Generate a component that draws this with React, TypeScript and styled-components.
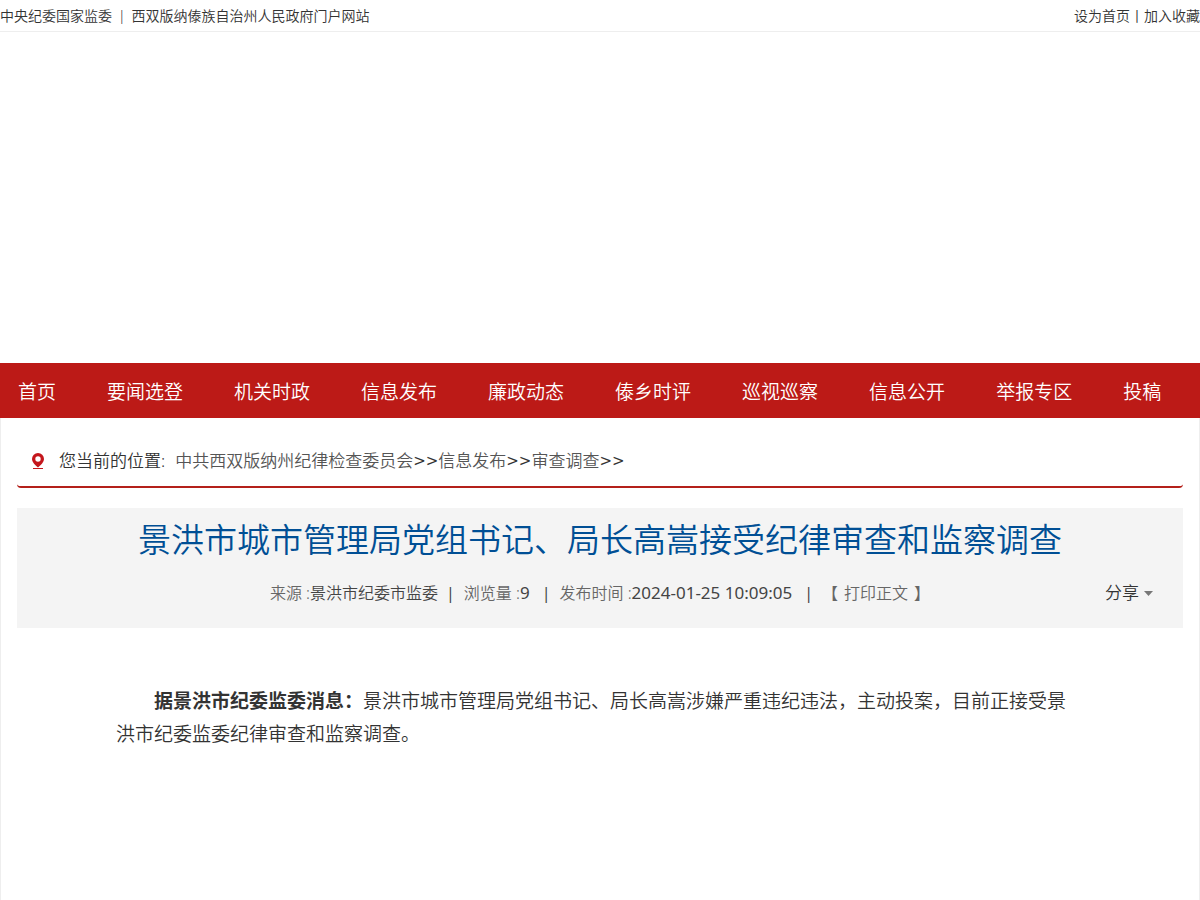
import React from 'react';
import styled, { createGlobalStyle } from 'styled-components';

const Global = createGlobalStyle`
  * { box-sizing: border-box; }
  body {
    margin: 0; background: #fff; color: #333;
    font: 350 14px/20px "Noto Sans", "Noto Sans CJK SC", sans-serif;
  }
  a { color: inherit; text-decoration: none; }
`;
const TopBar = styled.header`
  display: flex;
  justify-content: space-between;
  height: 32px;
  line-height: 32px;
  border-bottom: 1px solid #eee;
  white-space: nowrap;
`;
const SiteLinks = styled.div`
  display: flex;
  gap: 6px;
`;
const Banner = styled.div`
  height: 331px;
`;
const Nav = styled.nav`
  display: flex;
  gap: 51px;
  padding: 3px 0 0 18px;
  background: #bc1a17;
  color: #fff;
  font-size: 19px;
  line-height: 52px;
  white-space: nowrap;
`;
const Main = styled.main`
  border: solid #eee;
  border-width: 0 1px;
  padding: 25px 16px;
  min-height: 482px;
`;
const Crumbs = styled.div`
  display: flex;
  align-items: center;
  height: 45px;
  padding: 0 0 7px 14px;
  font-size: 17px;
  border-bottom: 2px solid #b4201a;
  border-radius: 4px;
  white-space: nowrap;
  a { color: #555; }
`;
const CrumbLabel = styled.span`
  margin: 0 10px 0 14px;
`;
const Arrows = styled.span`
  font-family: "DejaVu Sans", sans-serif;
  font-size: 15px;
  font-weight: 400;
`;
const Head = styled.section`
  background: #f4f4f4;
  margin-top: 20px;
  height: 120px;
  text-align: center;
`;
const Title = styled.h1`
  margin: 0;
  color: #004f95;
  font-size: 33px;
  font-weight: 350;
  line-height: 64px;
`;
const Meta = styled.div`
  position: relative;
  display: flex;
  justify-content: center;
  font-size: 16px;
  line-height: 42px;
  white-space: nowrap;
  color: #666;
`;
const Value = styled.span`
  color: #444;
`;
const NumberValue = styled(Value)`
  font-size: 17px;
  font-weight: 400;
`;
const Bar = styled.span<{ $before: number }>`
  margin: 0 9px 0 ${p => p.$before}px;
  font-weight: 400;
  color: #444;
`;
const PrintLink = styled.a`
  margin: 0 6px;
`;
const Share = styled.button`
  position: absolute;
  right: 30px;
  top: 0;
  display: flex;
  align-items: center;
  gap: 5px;
  border: 0;
  padding: 0;
  background: none;
  font: inherit;
  font-size: 17px;
  color: #333;
`;
const Body = styled.p`
  margin: 57px 100px 0 99px;
  font-size: 19px;
  line-height: 33px;
  text-indent: 38px;
  strong { font-weight: 700; }
`;

const items = ['首页', '要闻选登', '机关时政', '信息发布', '廉政动态', '傣乡时评', '巡视巡察', '信息公开', '举报专区', '投稿'];
const crumbs = ['中共西双版纳州纪律检查委员会', '信息发布', '审查调查'];

export default function App() {
  return (
    <>
      <Global />
      <TopBar>
        <SiteLinks>
          <a href="#">中央纪委国家监委</a>
          <span>|</span>
          <a href="#">西双版纳傣族自治州人民政府门户网站</a>
        </SiteLinks>
        <div><a href="#">设为首页</a>丨<a href="#">加入收藏</a></div>
      </TopBar>
      <Banner />
      <Nav>{items.map(t => <a href="#" key={t}>{t}</a>)}</Nav>
      <Main>
        <Crumbs>
          <svg width="14" height="18" viewBox="0 0 14 18" aria-hidden="true">
            <path fill="#c4161c" fillRule="evenodd" d="M7 1a6 6 0 0 0-6 6c0 3 3 6 6 8.500 3-2.500 6-5.500 6-8.500a6 6 0 0 0-6-6zm0 3.300a2.700 2.700 0 1 1 0 5.400 2.700 2.700 0 0 1 0-5.400z" />
            <path fill="#c4161c" d="M2 16h10v1H2z" />
          </svg>
          <CrumbLabel>您当前的位置:</CrumbLabel>
          {crumbs.map(t => (
            <React.Fragment key={t}>
              <a href="#">{t}</a>
              <Arrows>&gt;&gt;</Arrows>
            </React.Fragment>
          ))}
        </Crumbs>
        <Head>
          <Title>景洪市城市管理局党组书记、局长高嵩接受纪律审查和监察调查</Title>
          <Meta>
            <span>来源 :<Value>景洪市纪委市监委</Value></span>
            <Bar $before={8}>|</Bar>
            <span>浏览量 :<NumberValue>9</NumberValue></span>
            <Bar $before={12}>|</Bar>
            <span>发布时间 :<NumberValue>2024-01-25 10:09:05</NumberValue></span>
            <Bar $before={12}>|</Bar>
            <span>【<PrintLink href="#">打印正文</PrintLink>】</span>
            <Share type="button">
              分享
              <svg width="9" height="5" aria-hidden="true"><path fill="#777" d="M0 0h9L4.500 5z" /></svg>
            </Share>
          </Meta>
        </Head>
        <Body>
          <strong>据景洪市纪委监委消息：</strong>景洪市城市管理局党组书记、局长高嵩涉嫌严重违纪违法，主动投案，目前正接受景洪市纪委监委纪律审查和监察调查。
        </Body>
      </Main>
    </>
  );
}
